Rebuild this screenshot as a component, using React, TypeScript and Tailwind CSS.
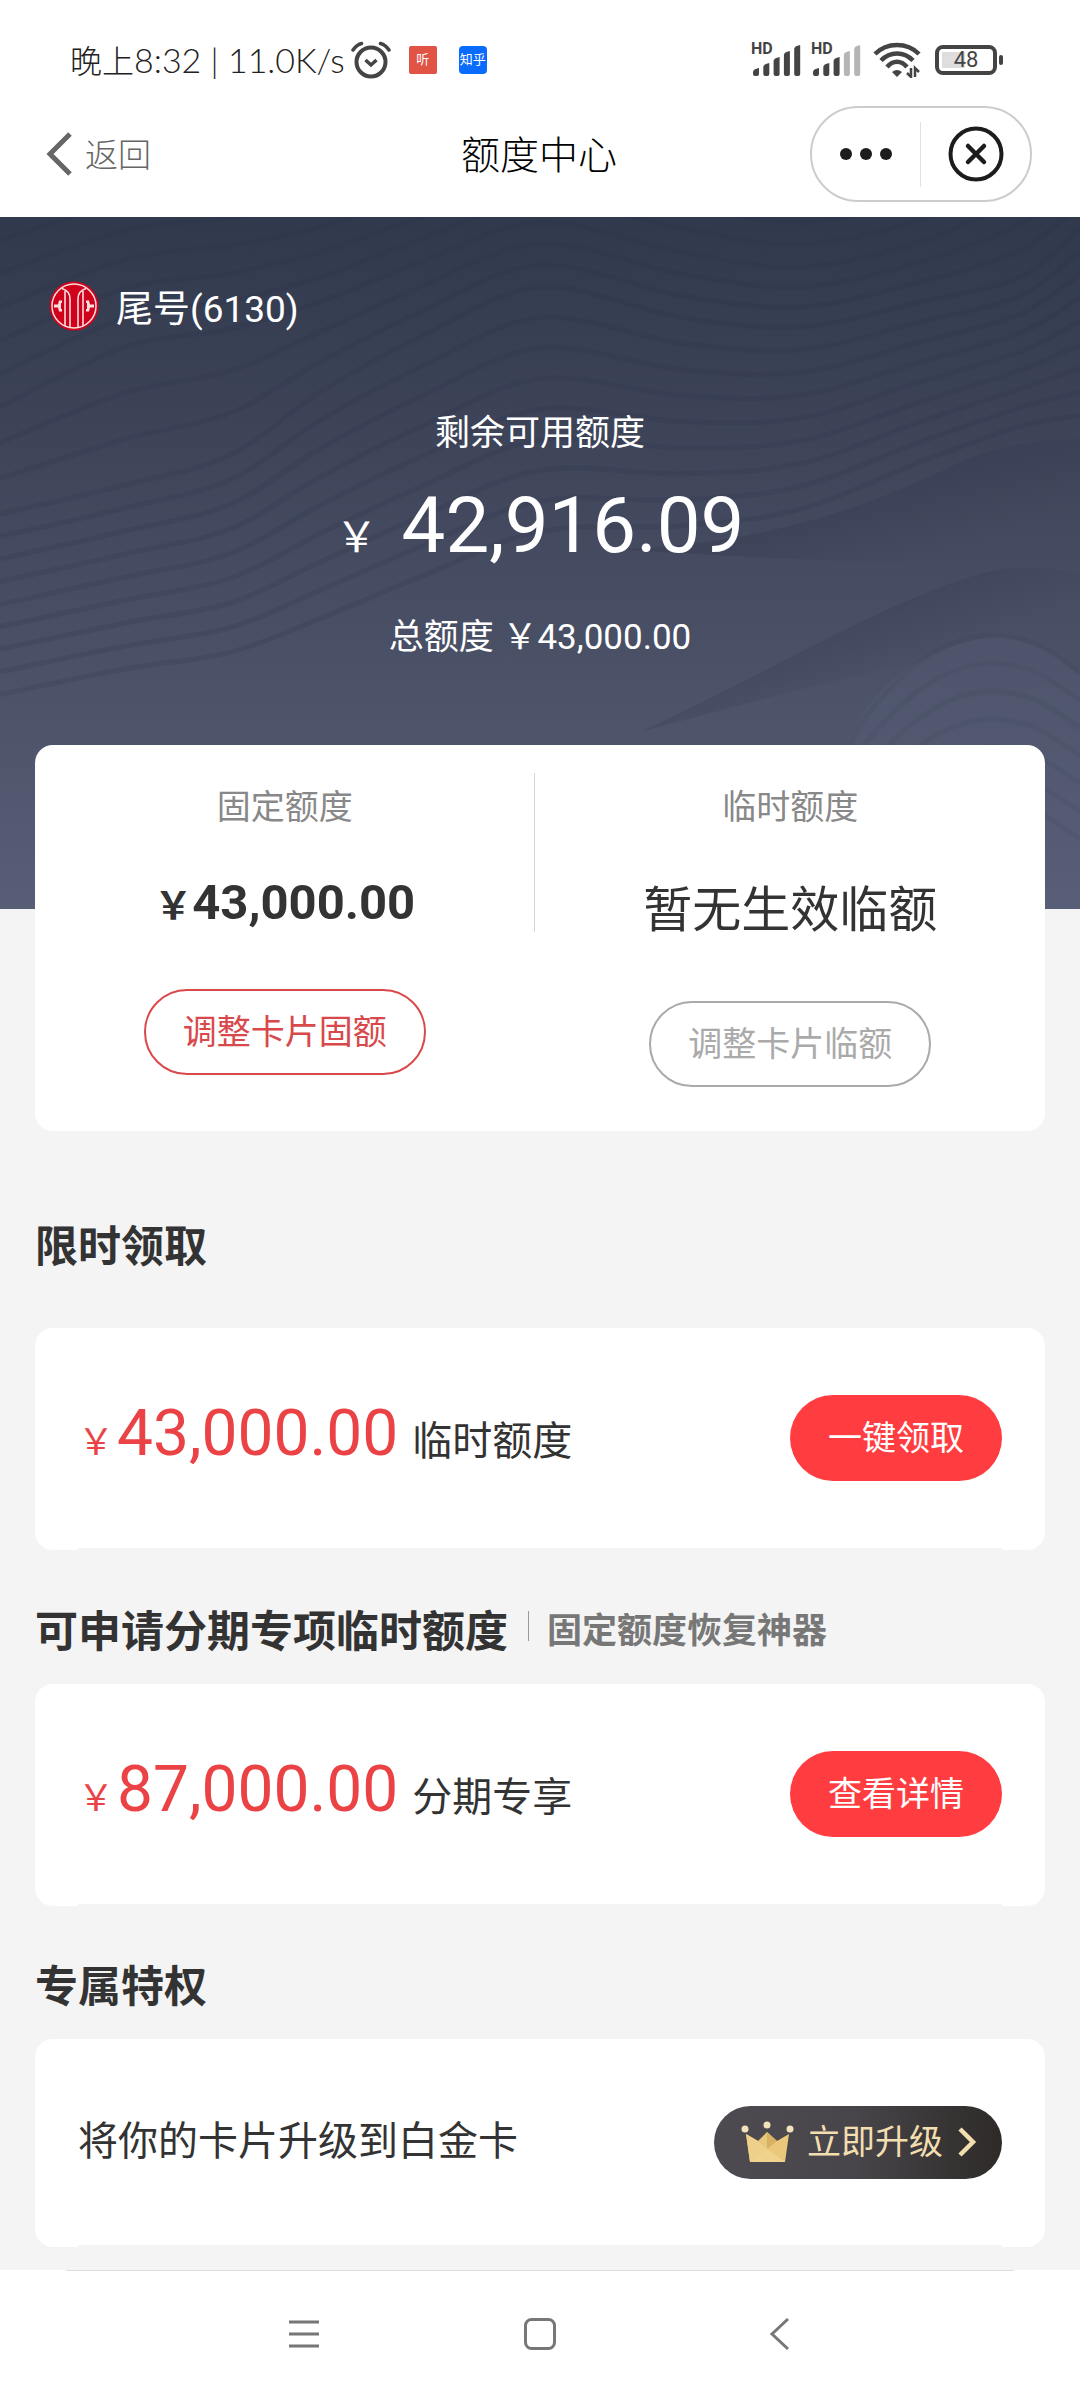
import { ReactNode } from 'react';

// Anchor points of the contour lines behind the balance
const waveX = [0, 125, 230, 320, 420, 540, 680, 800, 920, 1020, 1080];
const waveKeys = [
  [-10, -45, -55, -65, -90, -130, -110, -85, -110, -160, -200],
  [190, 130, 112, 85, 45, 5, 35, 50, 25, -20, -60],
  [297, 268, 238, 175, 120, 70, 100, 110, 85, 60, 10],
  [500, 475, 460, 430, 390, 345, 335, 315, 265, 228, 222],
];
const hillX = [840, 862, 920, 975, 1030, 1080];
const hillKeys = [
  [560, 505, 445, 420, 425, 455],
  [740, 690, 640, 615, 620, 650],
];

function curve(xs: number[], ys: number[]) {
  let d = `M${xs[0]} ${ys[0]}`;
  for (let i = 0; i < xs.length - 1; i++) {
    const a = Math.max(i - 1, 0);
    const b = Math.min(i + 2, xs.length - 1);
    const c1x = xs[i] + (xs[i + 1] - xs[a]) / 6;
    const c1y = ys[i] + (ys[i + 1] - ys[a]) / 6;
    const c2x = xs[i + 1] - (xs[b] - xs[i]) / 6;
    const c2y = ys[i + 1] - (ys[b] - ys[i]) / 6;
    d += `C${c1x} ${c1y} ${c2x} ${c2y} ${xs[i + 1]} ${ys[i + 1]}`;
  }
  return d;
}

function between(xs: number[], from: number[], to: number[], steps: number) {
  return Array.from({ length: steps }, (_, s) =>
    curve(xs, from.map((y, i) => y + ((to[i] - y) * s) / steps))
  );
}

const waves = [
  ...between(waveX, waveKeys[0], waveKeys[1], 6),
  ...between(waveX, waveKeys[1], waveKeys[2], 3),
  ...between(waveX, waveKeys[2], waveKeys[3], 9),
];
const hills = between(hillX, hillKeys[0], hillKeys[1], 7);

function HeroWaves() {
  return (
    <svg
      className="absolute inset-0 w-full h-full"
      viewBox="0 0 1080 692"
      preserveAspectRatio="none"
      fill="none"
      aria-hidden="true"
    >
      <defs>
        <linearGradient id="ridge" gradientUnits="userSpaceOnUse" x1="920" y1="255" x2="950" y2="335">
          <stop offset="0" stopColor="#343950" stopOpacity="0.4" />
          <stop offset="1" stopColor="#343950" stopOpacity="0" />
        </linearGradient>
        <linearGradient id="ridge2" gradientUnits="userSpaceOnUse" x1="900" y1="385" x2="930" y2="450">
          <stop offset="0" stopColor="#343950" stopOpacity="0.3" />
          <stop offset="1" stopColor="#343950" stopOpacity="0" />
        </linearGradient>
      </defs>
      <path d="M609 332C740 330 850 300 960 245C1010 225 1050 222 1080 222V345C960 350 820 345 609 332Z" fill="url(#ridge)" />
      <path d="M640 515C800 440 900 375 1000 352C1040 348 1060 352 1080 358V440C1000 420 880 450 640 515Z" fill="url(#ridge2)" />
      <path d="M840 560C850 470 940 420 1000 420C1040 425 1060 440 1080 460V692H840Z" fill="#5b6079" fillOpacity="0.3" />
      <g stroke="#2b3046" strokeOpacity="0.17" strokeWidth="5">
        {waves.map((d) => (
          <path key={d} d={d} />
        ))}
        {hills.map((d) => (
          <path key={d} d={d} strokeOpacity="0.08" />
        ))}
      </g>
    </svg>
  );
}

function BankLogo() {
  return (
    <svg className="size-[50px]" viewBox="0 0 50 50" fill="none" aria-hidden="true">
      <circle cx="25" cy="25" r="24.5" fill="#d0021b" />
      <circle cx="25" cy="25" r="22" stroke="#fbdede" strokeWidth="1.5" />
      <g stroke="#fbdede" strokeWidth="1.6">
        <path d="M13 7.500C18 9 21 13 21 18V46" />
        <path d="M37 7.500C32 9 29 13 29 18V46" />
        <path d="M16 10V45" />
        <path d="M34 10V45" />
      </g>
      <path d="M13 19.500H10L9 23.500H5V26.500H9L10 30.500H13V28H12V22H13Z" fill="#fbdede" />
      <path d="M37 19.500H40L41 23.500H45V26.500H41L40 30.500H37V28H38V22H37Z" fill="#fbdede" />
    </svg>
  );
}

function AlarmIcon() {
  return (
    <svg className="w-10 h-[38px]" viewBox="0 0 40 38" fill="none" stroke="#444" aria-hidden="true">
      <circle cx="20" cy="21" r="14.500" strokeWidth="4" />
      <path d="M14.500 19L20 24L25.500 19" strokeWidth="3.500" />
      <path d="M2 9C4 6 7 3.500 10.500 2.500M38 9C36 6 33 3.500 29.500 2.500" strokeWidth="3.500" strokeLinecap="round" />
    </svg>
  );
}

function Signal({ level }: { level: number }) {
  const tops = [25, 20, 14, 8, 2];
  return (
    <div className="relative w-[50px] h-9">
      <span className="absolute left-0 top-0 text-[16px] leading-[14px] font-bold">HD</span>
      <svg className="w-full h-full" viewBox="0 0 50 36" aria-hidden="true">
        {tops.map((top, i) => (
          <path
            key={top}
            d={`M${2 + i * 10.3} ${top + 5}Q${2 + i * 10.3} ${top + 2} ${8 + i * 10.3} ${top + 1}V32Q${8 + i * 10.3} 34 ${6 + i * 10.3} 34H${4 + i * 10.3}Q${2 + i * 10.3} 34 ${2 + i * 10.3} 32Z`}
            fill={i < level ? '#444' : '#b5b5b5'}
          />
        ))}
      </svg>
    </div>
  );
}

function WifiIcon() {
  return (
    <svg className="w-12 h-9" viewBox="0 0 48 36" fill="none" stroke="#444" aria-hidden="true">
      <path d="M2 12C14 0 34 0 46 12" strokeWidth="4.500" />
      <path d="M8 18.500C17 9 31 9 40 18.500" strokeWidth="4.500" />
      <path d="M14 25C20 18 28 18 34 25" strokeWidth="4.500" />
      <path d="M19 30Q24 26 29 30L24 35Z" fill="#444" stroke="none" />
      <path d="M38 26V35L34 31M42 35V26L46 30" strokeWidth="2.500" />
    </svg>
  );
}

function StatusBar() {
  return (
    <div className="flex items-center justify-between pl-[70px] pr-[77px] pt-[30px] text-[#444]">
      <div className="flex items-center h-[60px]">
        <span className="text-[34px] leading-[60px] font-light text-[#222] font-[Lato,'Noto_Sans_CJK_SC',sans-serif]">
          <span className="text-[32px]">晚上</span>8:32 | 11.0K/s
        </span>
        <div className="ml-[6px]">
          <AlarmIcon />
        </div>
        <span className="ml-[18px] flex size-7 items-center justify-center rounded-xs bg-[#e05345] text-[13px] text-white">
          听
        </span>
        <span className="ml-[22px] flex size-7 items-center justify-center rounded-sm bg-[#0a6cff] text-[13px] text-white">
          知乎
        </span>
      </div>
      <div className="flex items-center">
        <Signal level={5} />
        <div className="ml-[10px]">
          <Signal level={3} />
        </div>
        <div className="ml-3">
          <WifiIcon />
        </div>
        <div className="ml-[14px] flex items-center gap-[2px]">
          <div className="flex h-[30px] w-[62px] rounded-lg border-4 border-[#444] p-[3px]">
            <div className="flex w-full items-center justify-center bg-linear-to-r from-[#dedede] from-48% to-white to-48% text-[22px] leading-5">
              48
            </div>
          </div>
          <div className="h-[10px] w-1 rounded-full bg-[#444]" />
        </div>
      </div>
    </div>
  );
}

function TitleBar() {
  return (
    <header className="grid grid-cols-3 items-center pl-[46px] pr-12 pt-4 pb-[15px]">
      <button className="flex items-center gap-[13px] text-[33px] font-light text-[#666]">
        <svg className="w-[26px] h-11" viewBox="0 0 26 44" fill="none" aria-hidden="true">
          <path d="M24 2L4 22L24 42" stroke="#666" strokeWidth="5" />
        </svg>
        <span className="pt-1">返回</span>
      </button>
      <h1 className="pt-1 text-center text-[39px] font-light text-black">额度中心</h1>
      <div className="flex h-24 w-[222px] items-center justify-self-end rounded-full border-2 border-[#ccc]">
        <button className="flex flex-1 items-center justify-center gap-2" aria-label="更多">
          <span className="size-3 rounded-full bg-[#1c1c1c]" />
          <span className="size-3 rounded-full bg-[#1c1c1c]" />
          <span className="size-3 rounded-full bg-[#1c1c1c]" />
        </button>
        <div className="h-[65px] w-px bg-[#e2e2e2]" />
        <button className="flex flex-1 items-center justify-center" aria-label="关闭">
          <svg className="size-[56px]" viewBox="0 0 56 56" fill="none" stroke="#1c1c1c" aria-hidden="true">
            <circle cx="28" cy="28" r="25.500" strokeWidth="4" />
            <path d="M20 20L36 36M36 20L20 36" strokeWidth="4.500" strokeLinecap="round" />
          </svg>
        </button>
      </div>
    </header>
  );
}

function Hero() {
  return (
    <section className="relative bg-linear-to-b from-[#31394d] via-[#454b60] to-[#585e76] pt-16 pb-[246px] text-white">
      <HeroWaves />
      <div className="relative">
        <div className="flex items-start gap-[17px] pl-[49px]">
          <BankLogo />
          <span className="pt-1 text-[37px] leading-[50px]">尾号(6130)</span>
        </div>
        <p className="mt-[74px] text-center text-[35px] leading-[50px]">剩余可用额度</p>
        <p className="mt-[22px] flex items-baseline justify-center gap-6 text-[78px] leading-[90px]">
          <span className="text-[42px] leading-none">￥</span>42,916.09
        </p>
        <p className="mt-[42px] text-center text-[35px] leading-[50px]">总额度 ￥43,000.00</p>
      </div>
    </section>
  );
}

function LimitCard() {
  return (
    <section className="relative mx-[35px] -mt-[164px] grid grid-cols-[49fr_1px_50fr] rounded-[18px] bg-white pb-11 text-center">
      <div className="pt-[37px]">
        <p className="text-[34px] leading-[50px] text-[#888]">固定额度</p>
        <p className="mt-[35px] flex items-baseline justify-center text-[49px] leading-[72px] font-bold text-[#333]">
          <span className="text-[38px] leading-none">￥</span>43,000.00
        </p>
        <button className="mt-[50px] h-[86px] rounded-full border-2 border-[#d9484b] px-[37px] text-[34px] text-[#d9484b]">
          调整卡片固额
        </button>
      </div>
      <div className="mt-7 h-[159px] bg-[#d5d5d5]" />
      <div className="pt-[37px]">
        <p className="text-[34px] leading-[50px] text-[#888]">临时额度</p>
        <p className="mt-[35px] text-[49px] leading-[88px] text-[#333]">暂无生效临额</p>
        <button className="mt-[46px] h-[86px] rounded-full border-2 border-[#aaa] px-[37px] text-[34px] text-[#aaa]">
          调整卡片临额
        </button>
      </div>
    </section>
  );
}

function Card({ children }: { children: ReactNode }) {
  return (
    <div className="mx-[35px] rounded-[18px] bg-white px-[43px]">
      <div className="flex items-center justify-between border-b-2 border-[#f4f4f4]">{children}</div>
    </div>
  );
}

function OfferCard({ amount, label, action }: { amount: string; label: string; action: string }) {
  return (
    <Card>
      <p className="flex items-baseline pt-[61px] pb-[69px] text-[64px] leading-[90px] text-[#ea4245]">
        <span className="mr-[3px] text-[36px] leading-none">￥</span>
        {amount}
        <span className="ml-[14px] text-[40px] leading-none text-[#333]">{label}</span>
      </p>
      <button className="h-[86px] rounded-full bg-[#ff3d40] px-[38px] text-[34px] text-white">{action}</button>
    </Card>
  );
}

function CrownIcon() {
  return (
    <svg className="w-[54px] h-[42px]" viewBox="0 0 54 42" aria-hidden="true">
      <path d="M5 13L17 20L26 11L36 20L48 13L44 41H9Z" fill="#e9c77b" />
      <path d="M26 11L36 20L26 28Z" fill="#d9b064" />
      <path d="M9 41L26 28L44 41Z" fill="#f0d48e" />
      <path d="M5 13L17 20L26 28L9 41Z" fill="#efd08a" />
      <circle cx="4" cy="8" r="3.500" fill="#f3e3bd" />
      <circle cx="26" cy="4" r="3.500" fill="#f3e3bd" />
      <circle cx="49" cy="8" r="3.500" fill="#f3e3bd" />
    </svg>
  );
}

function NavBar() {
  return (
    <nav className="bg-white">
      <div className="mx-[66px] h-px bg-[#dcdcdc]" />
      <div className="grid grid-cols-3 justify-items-center px-[183px] pt-[46px] pb-[49px]">
        <button aria-label="菜单">
          <svg className="w-10 h-[34px]" viewBox="0 0 40 34" stroke="#777" strokeWidth="3" aria-hidden="true">
            <path d="M7 5H37M7 17H37M7 29H37" />
          </svg>
        </button>
        <button aria-label="主页">
          <svg className="size-[34px]" viewBox="0 0 34 34" fill="none" stroke="#777" strokeWidth="3" aria-hidden="true">
            <rect x="2.500" y="2.500" width="29" height="29" rx="6" />
          </svg>
        </button>
        <button aria-label="后退">
          <svg className="w-10 h-[34px]" viewBox="0 0 40 34" fill="none" stroke="#777" strokeWidth="3" aria-hidden="true">
            <path d="M30 2L14 17L30 32" />
          </svg>
        </button>
      </div>
    </nav>
  );
}

export default function App() {
  return (
    <div className="min-h-screen bg-[#f4f4f4] font-[Roboto,'Noto_Sans_CJK_SC',sans-serif]">
      <div className="bg-white">
        <StatusBar />
        <TitleBar />
      </div>

      <main>
        <Hero />
        <LimitCard />

        {/* Limited time offer */}
        <h2 className="mx-[35px] mt-[86px] mb-[51px] text-[43px] leading-[60px] font-bold text-[#333]">限时领取</h2>
        <OfferCard amount="43,000.00" label="临时额度" action="一键领取" />

        {/* Instalment limit */}
        <div className="mx-[35px] mt-[52px] mb-[22px] flex items-center">
          <h2 className="text-[43px] leading-[60px] font-bold text-[#333]">可申请分期专项临时额度</h2>
          <div className="ml-5 mr-[18px] mb-3 h-[30px] w-px bg-[#999]" />
          <span className="text-[35px] font-bold text-[#777]">固定额度恢复神器</span>
        </div>
        <OfferCard amount="87,000.00" label="分期专享" action="查看详情" />

        {/* Privileges */}
        <h2 className="mx-[35px] mt-[51px] mb-[22px] text-[43px] leading-[60px] font-bold text-[#333]">专属特权</h2>
        <Card>
          <p className="py-[73px] text-[40px] leading-[60px] text-[#333]">将你的卡片升级到白金卡</p>
          <button className="flex h-[73px] items-center rounded-full bg-linear-to-r from-[#4d4a51] via-[#48454a] to-[#2d2a28] pl-[27px] pr-[25px] text-[34px] text-[#f3deb0]">
            <CrownIcon />
            <span className="ml-3">立即升级</span>
            <svg className="ml-[14px] w-5 h-8" viewBox="0 0 20 32" fill="none" aria-hidden="true">
              <path d="M3 3L16 16L3 29" stroke="#f3deb0" strokeWidth="4.500" />
            </svg>
          </button>
        </Card>
      </main>

      <div className="mt-[23px]">
        <NavBar />
      </div>
    </div>
  );
}
